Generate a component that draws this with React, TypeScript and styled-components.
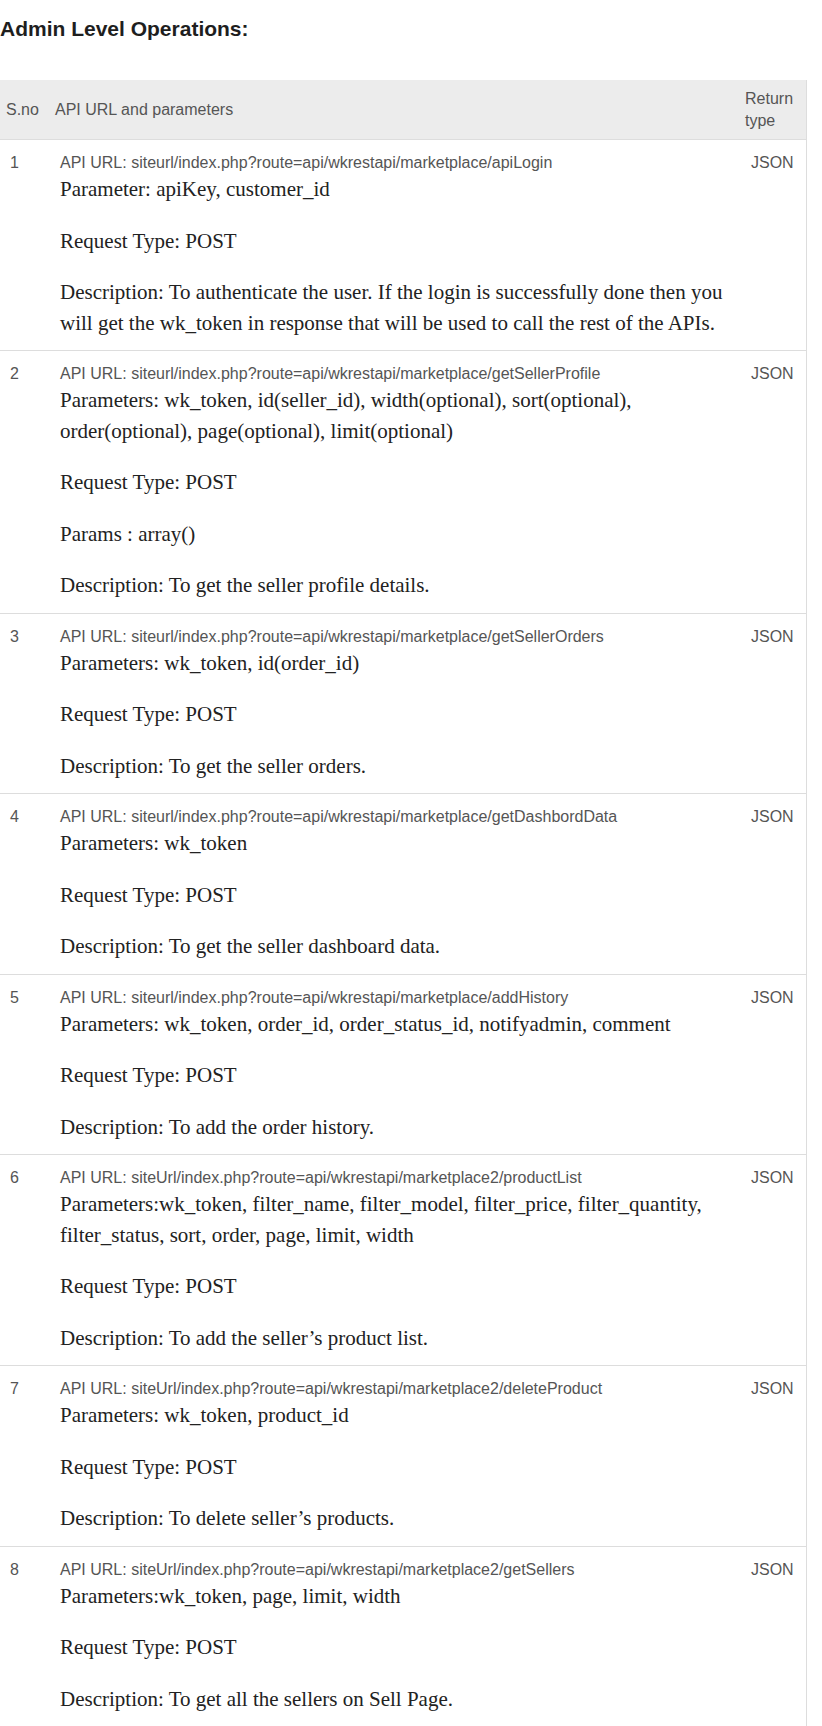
import React from "react";
import styled, { createGlobalStyle } from "styled-components";

const GlobalStyle = createGlobalStyle`
  html, body {
    margin: 0;
    padding: 0;
    background: #ffffff;
  }
  body {
    font-family: "Liberation Sans", Arial, sans-serif;
    color: #222;
  }
`;

const Page = styled.div`
  width: 822px;
`;

const Heading = styled.h2`
  margin: 0 0 39px;
  padding-top: 16px;
  font-family: "Liberation Sans", Arial, sans-serif;
  font-size: 21px;
  line-height: 25px;
  font-weight: 700;
  color: #1e1e1e;
`;

const Table = styled.div`
  width: 806px;
  border-right: 1px solid #dddddd;
`;

const Row = styled.div<{ $head?: boolean; $last?: boolean }>`
  display: grid;
  grid-template-columns: 48px 692px 66px;
  background: ${(p) => (p.$head ? "#ececec" : "#ffffff")};
  border-bottom: 1px solid #dddddd;
  ${(p) => (p.$head ? "height: 60px; box-sizing: border-box;" : "")}
`;

const HeadCell = styled.div<{ $pl: number }>`
  display: flex;
  align-items: center;
  padding-left: ${(p) => p.$pl}px;
  font-size: 16px;
  line-height: 22px;
  color: #555555;
`;

const Cell = styled.div<{ $pl: number }>`
  padding: 12px 8px 12px ${(p) => p.$pl}px;
  font-size: 16px;
  line-height: 22px;
  color: #555555;
`;

const Url = styled.div`
  font-size: 16px;
  line-height: 22px;
  color: #555555;
`;

const Para = styled.p`
  margin: 0 0 21px;
  font-family: "Liberation Serif", "Times New Roman", serif;
  font-size: 21px;
  line-height: 30.5px;
  color: #222222;
  &:last-child {
    margin-bottom: 0;
  }
`;

type Api = { url: string; paras: string[] };

const apis: Api[] = [
  {
    url: "siteurl/index.php?route=api/wkrestapi/marketplace/apiLogin",
    paras: [
      "Parameter: apiKey, customer_id",
      "Request Type: POST",
      "Description: To authenticate the user. If the login is successfully done then you will get the wk_token in response that will be used to call the rest of the APIs.",
    ],
  },
  {
    url: "siteurl/index.php?route=api/wkrestapi/marketplace/getSellerProfile",
    paras: [
      "Parameters: wk_token, id(seller_id), width(optional), sort(optional), order(optional), page(optional), limit(optional)",
      "Request Type: POST",
      "Params : array()",
      "Description: To get the seller profile details.",
    ],
  },
  {
    url: "siteurl/index.php?route=api/wkrestapi/marketplace/getSellerOrders",
    paras: [
      "Parameters: wk_token, id(order_id)",
      "Request Type: POST",
      "Description: To get the seller orders.",
    ],
  },
  {
    url: "siteurl/index.php?route=api/wkrestapi/marketplace/getDashbordData",
    paras: [
      "Parameters: wk_token",
      "Request Type: POST",
      "Description: To get the seller dashboard data.",
    ],
  },
  {
    url: "siteurl/index.php?route=api/wkrestapi/marketplace/addHistory",
    paras: [
      "Parameters: wk_token, order_id, order_status_id, notifyadmin, comment",
      "Request Type: POST",
      "Description: To add the order history.",
    ],
  },
  {
    url: "siteUrl/index.php?route=api/wkrestapi/marketplace2/productList",
    paras: [
      "Parameters:wk_token, filter_name, filter_model, filter_price, filter_quantity, filter_status, sort, order, page, limit, width",
      "Request Type: POST",
      "Description: To add the seller\u2019s product list.",
    ],
  },
  {
    url: "siteUrl/index.php?route=api/wkrestapi/marketplace2/deleteProduct",
    paras: [
      "Parameters: wk_token, product_id",
      "Request Type: POST",
      "Description: To delete seller\u2019s products.",
    ],
  },
  {
    url: "siteUrl/index.php?route=api/wkrestapi/marketplace2/getSellers",
    paras: [
      "Parameters:wk_token, page, limit, width",
      "Request Type: POST",
      "Description: To get all the sellers on Sell Page.",
    ],
  },
];

export default function App() {
  return (
    <Page>
      <GlobalStyle />
      <Heading>Admin Level Operations:</Heading>
      <Table>
        <Row $head>
          <HeadCell $pl={6}>S.no</HeadCell>
          <HeadCell $pl={7}>API URL and parameters</HeadCell>
          <HeadCell $pl={5}>
            Return
            <br />
            type
          </HeadCell>
        </Row>
        {apis.map((a, i) => (
          <Row key={i} $last={i === apis.length - 1}>
            <Cell $pl={10}>{i + 1}</Cell>
            <Cell $pl={12}>
              <Url>API URL: {a.url}</Url>
              {a.paras.map((p, j) => (
                <Para key={j}>{p}</Para>
              ))}
            </Cell>
            <Cell $pl={11}>JSON</Cell>
          </Row>
        ))}
      </Table>
    </Page>
  );
}
